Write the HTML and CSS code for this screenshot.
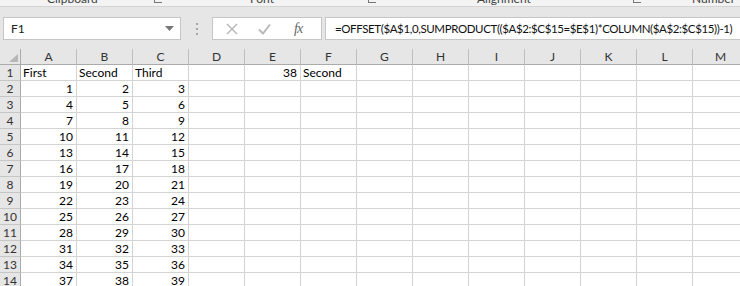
FILE: index.html
```html
<!DOCTYPE html>
<html>
<head>
<meta charset="utf-8">
<link rel="stylesheet" href="styles.css">
</head>
<body>
<div class="ribbon">
  <div class="group g1"><span class="glabel">Clipboard</span><span class="launch"></span></div>
  <div class="group g2"><span class="glabel">Font</span><span class="launch"></span></div>
  <div class="group g3"><span class="glabel">Alignment</span><span class="launch"></span></div>
  <div class="group g4"><span class="glabel">Number</span></div>
</div>
<div class="fbar">
  <div class="namebox"><span class="nametext">F1</span><svg class="dd" width="9" height="5" viewBox="0 0 9 5"><path d="M0 0H9L4.5 5Z" fill="#777"/></svg></div>
  <div class="dots"><span></span><span></span><span></span></div>
  <div class="btns">
    <svg class="ic" width="12" height="12" viewBox="0 0 12 12"><path d="M1 1L11 11M11 1L1 11" stroke="#b4b4b4" stroke-width="1.4" fill="none"/></svg>
    <svg class="ic" width="13" height="12" viewBox="0 0 13 12"><path d="M1 6.5L5 10.5L12 1.5" stroke="#b9b9b9" stroke-width="2" fill="none"/></svg>
    <span class="fx">fx</span>
  </div>
  <div class="formula">=OFFSET($A$1,0,SUMPRODUCT(($A$2:$C$15=$E$1)*COLUMN($A$2:$C$15))-1)</div>
</div>
<div class="sheet">
  <div class="hdr corner"><svg width="9" height="8" viewBox="0 0 9 8"><path d="M9 0V8H0Z" fill="#b7b7b7"/></svg></div>
  <div class="hdr">A</div><div class="hdr">B</div><div class="hdr">C</div><div class="hdr">D</div><div class="hdr">E</div><div class="hdr">F</div><div class="hdr">G</div><div class="hdr">H</div><div class="hdr">I</div><div class="hdr">J</div><div class="hdr">K</div><div class="hdr">L</div><div class="hdr">M</div>

  <div class="rh">1</div><div class="c">First</div><div class="c">Second</div><div class="c">Third</div><div class="c"></div><div class="c n">38</div><div class="c">Second</div><div class="c"></div><div class="c"></div><div class="c"></div><div class="c"></div><div class="c"></div><div class="c"></div><div class="c"></div>
  <div class="rh">2</div><div class="c n">1</div><div class="c n">2</div><div class="c n">3</div><div class="c"></div><div class="c"></div><div class="c"></div><div class="c"></div><div class="c"></div><div class="c"></div><div class="c"></div><div class="c"></div><div class="c"></div><div class="c"></div>
  <div class="rh">3</div><div class="c n">4</div><div class="c n">5</div><div class="c n">6</div><div class="c"></div><div class="c"></div><div class="c"></div><div class="c"></div><div class="c"></div><div class="c"></div><div class="c"></div><div class="c"></div><div class="c"></div><div class="c"></div>
  <div class="rh">4</div><div class="c n">7</div><div class="c n">8</div><div class="c n">9</div><div class="c"></div><div class="c"></div><div class="c"></div><div class="c"></div><div class="c"></div><div class="c"></div><div class="c"></div><div class="c"></div><div class="c"></div><div class="c"></div>
  <div class="rh">5</div><div class="c n">10</div><div class="c n">11</div><div class="c n">12</div><div class="c"></div><div class="c"></div><div class="c"></div><div class="c"></div><div class="c"></div><div class="c"></div><div class="c"></div><div class="c"></div><div class="c"></div><div class="c"></div>
  <div class="rh">6</div><div class="c n">13</div><div class="c n">14</div><div class="c n">15</div><div class="c"></div><div class="c"></div><div class="c"></div><div class="c"></div><div class="c"></div><div class="c"></div><div class="c"></div><div class="c"></div><div class="c"></div><div class="c"></div>
  <div class="rh">7</div><div class="c n">16</div><div class="c n">17</div><div class="c n">18</div><div class="c"></div><div class="c"></div><div class="c"></div><div class="c"></div><div class="c"></div><div class="c"></div><div class="c"></div><div class="c"></div><div class="c"></div><div class="c"></div>
  <div class="rh">8</div><div class="c n">19</div><div class="c n">20</div><div class="c n">21</div><div class="c"></div><div class="c"></div><div class="c"></div><div class="c"></div><div class="c"></div><div class="c"></div><div class="c"></div><div class="c"></div><div class="c"></div><div class="c"></div>
  <div class="rh">9</div><div class="c n">22</div><div class="c n">23</div><div class="c n">24</div><div class="c"></div><div class="c"></div><div class="c"></div><div class="c"></div><div class="c"></div><div class="c"></div><div class="c"></div><div class="c"></div><div class="c"></div><div class="c"></div>
  <div class="rh">10</div><div class="c n">25</div><div class="c n">26</div><div class="c n">27</div><div class="c"></div><div class="c"></div><div class="c"></div><div class="c"></div><div class="c"></div><div class="c"></div><div class="c"></div><div class="c"></div><div class="c"></div><div class="c"></div>
  <div class="rh">11</div><div class="c n">28</div><div class="c n">29</div><div class="c n">30</div><div class="c"></div><div class="c"></div><div class="c"></div><div class="c"></div><div class="c"></div><div class="c"></div><div class="c"></div><div class="c"></div><div class="c"></div><div class="c"></div>
  <div class="rh">12</div><div class="c n">31</div><div class="c n">32</div><div class="c n">33</div><div class="c"></div><div class="c"></div><div class="c"></div><div class="c"></div><div class="c"></div><div class="c"></div><div class="c"></div><div class="c"></div><div class="c"></div><div class="c"></div>
  <div class="rh">13</div><div class="c n">34</div><div class="c n">35</div><div class="c n">36</div><div class="c"></div><div class="c"></div><div class="c"></div><div class="c"></div><div class="c"></div><div class="c"></div><div class="c"></div><div class="c"></div><div class="c"></div><div class="c"></div>
  <div class="rh">14</div><div class="c n">37</div><div class="c n">38</div><div class="c n">39</div><div class="c"></div><div class="c"></div><div class="c"></div><div class="c"></div><div class="c"></div><div class="c"></div><div class="c"></div><div class="c"></div><div class="c"></div><div class="c"></div>
</div>
</body>
</html>
```
FILE: styles.css
```css
html, body {
  margin: 0;
  padding: 0;
}
body {
  width: 740px;
  height: 286px;
  overflow: hidden;
  background: #e6e6e6;
  font-family: Lato, "Liberation Sans", sans-serif;
  color: #000;
}
.ribbon {
  height: 6px;
  background: #f3f3f3;
  border-bottom: 1px solid #d4d4d4;
  overflow: hidden;
  display: flex;
}
.group {
  display: flex;
  align-items: flex-start;
  flex: none;
}
.g1 { width: 166px; }
.g2 { width: 214px; }
.g3 { width: 265px; }
.g4 { width: 95px; }
.glabel {
  font-size: 12px;
  line-height: 12px;
  margin-top: -7px;
  color: #444;
  white-space: nowrap;
}
.g1 .glabel { margin-left: 47px; }
.g2 .glabel { margin-left: 84px; }
.g3 .glabel { margin-left: 97px; }
.g4 .glabel { margin-left: 47px; }
.launch {
  margin-left: auto;
  margin-right: 4px;
  width: 7px;
  height: 2px;
  border-left: 1px solid #777;
  border-bottom: 1px solid #777;
}
.fbar {
  display: flex;
  align-items: center;
  padding: 10px 0 9px 3px;
  height: 23px;
}
.namebox {
  box-sizing: border-box;
  width: 178px;
  height: 23px;
  background: #fff;
  border: 1px solid #c6c6c6;
  display: flex;
  align-items: center;
  padding: 0 6px 0 7px;
  flex: none;
}
.nametext {
  font-size: 12px;
  flex: 1;
  color: #222;
}
.dots {
  width: 31px;
  display: flex;
  flex-direction: column;
  align-items: center;
  gap: 3px;
  flex: none;
}
.dots span {
  width: 2px;
  height: 2px;
  background: #a6a6a6;
}
.btns {
  box-sizing: border-box;
  width: 110px;
  height: 23px;
  background: #fff;
  border: 1px solid #c6c6c6;
  display: flex;
  align-items: center;
  padding-left: 13px;
  flex: none;
}
.btns .ic:nth-child(1) { margin-right: 20px; }
.btns .ic:nth-child(2) { margin-right: 23px; }
.fx {
  font-family: "Liberation Serif", serif;
  font-style: italic;
  font-size: 14px;
  color: #666;
  letter-spacing: -1px;
}
.formula {
  box-sizing: border-box;
  margin-left: 3px;
  flex: 1;
  height: 23px;
  background: #fff;
  border: 1px solid #c6c6c6;
  border-right: none;
  display: flex;
  align-items: center;
  padding-left: 9px;
  font-size: 11.5px;
  letter-spacing: -0.38px;
  white-space: nowrap;
  overflow: hidden;
  color: #111;
}
.sheet {
  display: grid;
  grid-template-columns: 21px repeat(13, 56px);
  grid-auto-rows: 16px;
  background: #fff;
}
.hdr, .rh, .c {
  box-sizing: border-box;
  font-size: 12px;
  line-height: 15px;
  border-right: 1px solid #d4d4d4;
  border-bottom: 1px solid #d4d4d4;
  white-space: nowrap;
  overflow: hidden;
}
.hdr {
  background: #e6e6e6;
  text-align: center;
  color: #333;
  border-right-color: #bfbfbf;
  border-bottom-color: #ababab;
}
.corner {
  display: flex;
  align-items: flex-end;
  justify-content: flex-end;
  padding: 0 2px 2px 0;
  border-right-color: #ababab;
}
.rh {
  background: #e6e6e6;
  text-align: center;
  color: #333;
  border-right-color: #ababab;
  border-bottom-color: #c6c6c6;
}
.c {
  padding: 0 3px 0 2px;
}
.c.n {
  text-align: right;
}
```
